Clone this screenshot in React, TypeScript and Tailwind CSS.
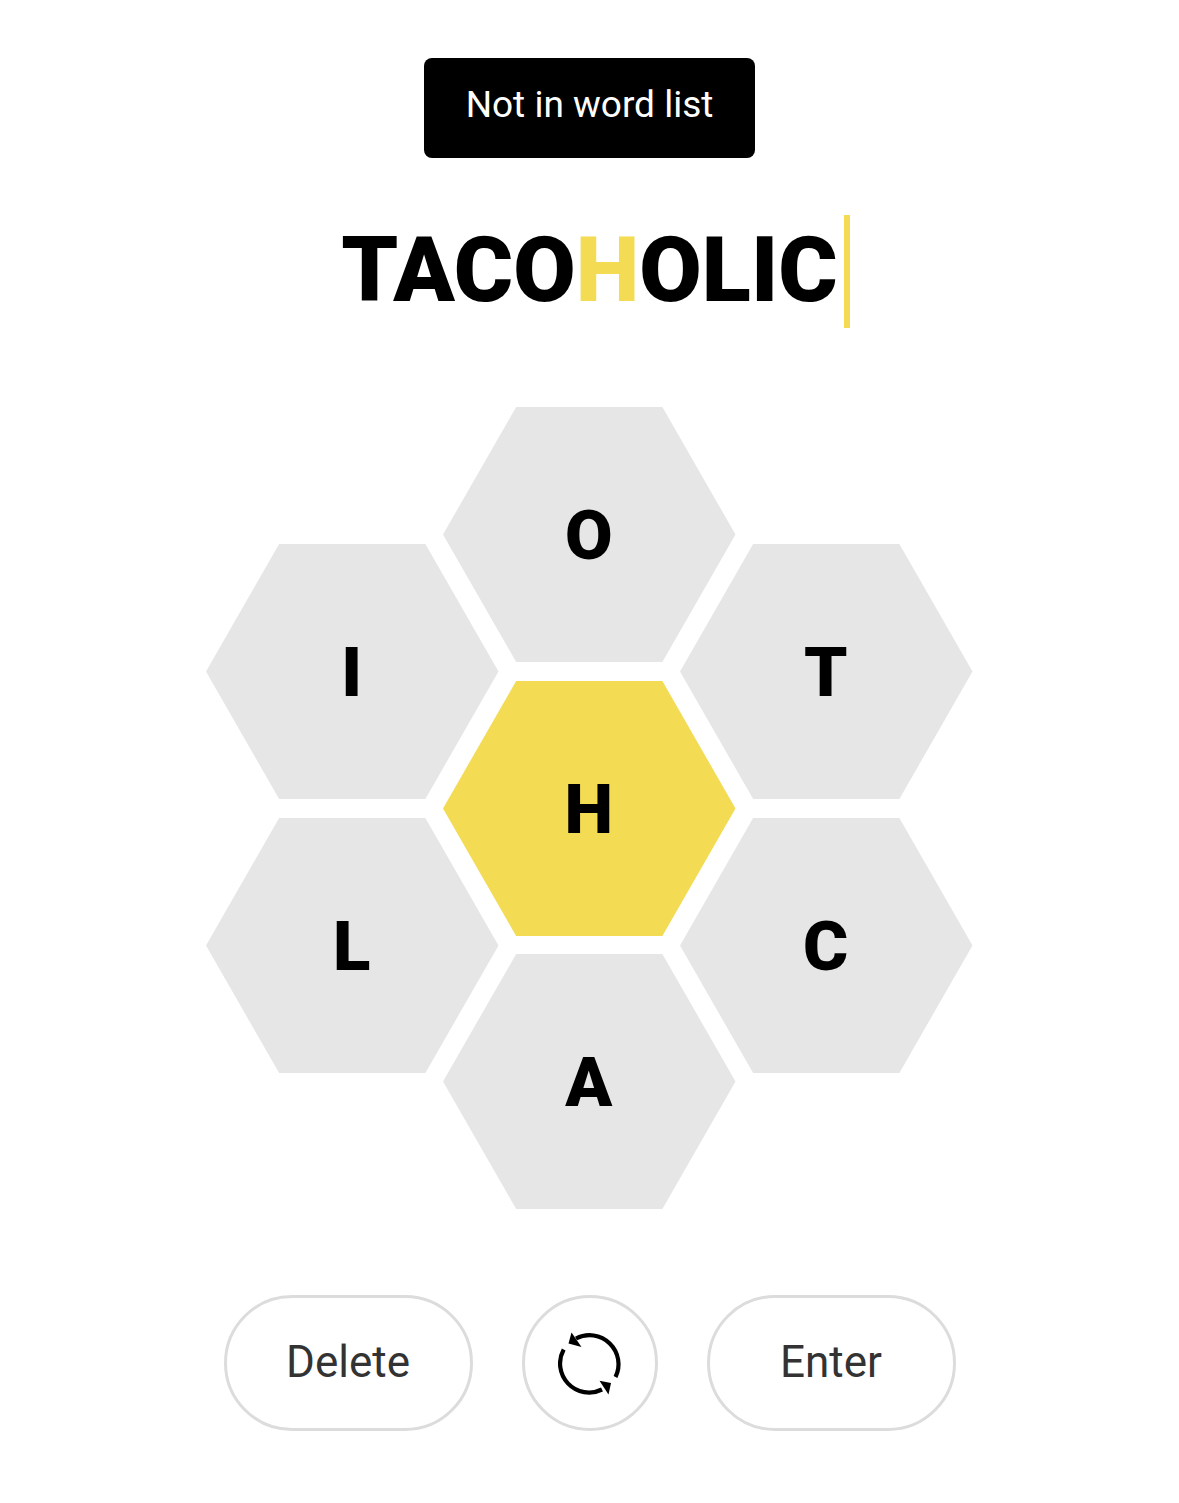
const cells = [
  { letter: "O", left: "left-[237px]", top: "top-0", center: false },
  { letter: "I", left: "left-0", top: "top-[137px]", center: false },
  { letter: "T", left: "left-[474px]", top: "top-[137px]", center: false },
  { letter: "H", left: "left-[237px]", top: "top-[274px]", center: true },
  { letter: "L", left: "left-0", top: "top-[411px]", center: false },
  { letter: "C", left: "left-[474px]", top: "top-[411px]", center: false },
  { letter: "A", left: "left-[237px]", top: "top-[547px]", center: false },
];

function Hex({ letter, left, top, center }: (typeof cells)[number]) {
  return (
    <div
      className={`absolute ${left} ${top} flex h-[255px] w-[292.5px] items-center justify-center pt-[3px] pr-px text-[69px] font-black text-black [clip-path:polygon(25%_0,75%_0,100%_50%,75%_100%,25%_100%,0_50%)] ${
        center ? "bg-[#f3db53]" : "bg-[#e6e6e6]"
      }`}
    >
      {letter}
    </div>
  );
}

function ShuffleIcon() {
  return (
    <svg viewBox="0 0 64 64" className="h-16 w-16" aria-hidden>
      <path d="M18 7.5A29 29 0 0 1 57.5 46" fill="none" stroke="black" strokeWidth="4.2" />
      <path d="M5.7 18.5A29 29 0 0 0 44 58.5" fill="none" stroke="black" strokeWidth="4.2" />
      <path d="M10.5 12.5L13.5 1.5L23.5 16Z" fill="black" />
      <path d="M53 52L50.5 63.5L41.5 49.8Z" fill="black" />
    </svg>
  );
}

export default function App() {
  return (
    <div className="flex h-[1503px] w-[1179px] flex-col items-center bg-white pt-[58px] font-['Roboto',sans-serif]">
      <div className="flex h-[100px] w-[331px] items-center justify-center rounded-lg bg-black pb-1.5 text-[37px] font-normal text-white">
        Not in word list
      </div>

      <div className="mt-[57px] ml-3 flex h-[113px] items-center text-[90.5px] font-black text-black">
        <span className="pb-0.5">TACO</span>
        <span className="pb-0.5 text-[#f3db53]">H</span>
        <span className="pb-0.5">OLIC</span>
        <span className="ml-1.5 h-[113px] w-1.5 bg-[#f3db53]" />
      </div>

      <div className="relative mt-[79px] mr-px h-[802px] w-[766px]">
        {cells.map((cell) => (
          <Hex key={cell.letter} {...cell} />
        ))}
      </div>

      <div className="mt-[86px] flex items-center gap-[49px] text-[44px] font-normal text-[#333333]">
        <button type="button" className="h-[136px] w-[249px] rounded-full border-[3px] border-[#dcdcdc] pb-0.5">
          Delete
        </button>
        <button
          type="button"
          aria-label="Shuffle"
          className="flex h-[136px] w-[136px] items-center justify-center rounded-full border-[3px] border-[#dcdcdc]"
        >
          <ShuffleIcon />
        </button>
        <button type="button" className="h-[136px] w-[249px] rounded-full border-[3px] border-[#dcdcdc] pb-0.5">
          Enter
        </button>
      </div>
    </div>
  );
}
